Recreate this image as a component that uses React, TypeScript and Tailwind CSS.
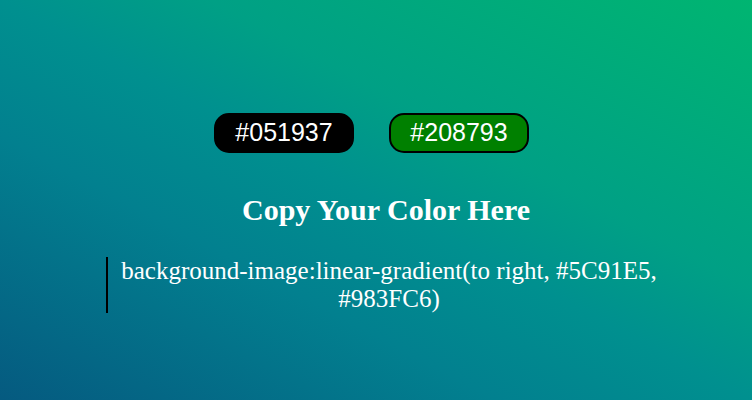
export default function App() {
  return (
    <div className="w-[752px] h-[400px] overflow-hidden bg-[linear-gradient(to_top_right,#055a80_0%,#02808f_33%,#00908f_50%,#00a085_64%,#00b571_100%)] flex flex-col">
      <div className="flex mt-[113px] ml-[214px] gap-[35px]">
        <div className="w-[140px] h-[40px] rounded-[15px] bg-black border-2 border-black flex items-center justify-center text-white text-[25px] font-['Liberation_Sans',Arial,sans-serif]">
          #051937
        </div>
        <div className="w-[140px] h-[40px] rounded-[15px] bg-[#008000] border-2 border-black flex items-center justify-center text-white text-[25px] font-['Liberation_Sans',Arial,sans-serif]">
          #208793
        </div>
      </div>
      <div className="mt-[40px] ml-[20px] w-[732px] text-center text-white font-bold text-[30px] leading-[34px] font-['Liberation_Serif','Times_New_Roman',serif]">
        Copy Your Color Here
      </div>
      <div className="mt-[30px] ml-[106px] w-[564px] border-l-2 border-black text-center text-white text-[25px] leading-[28px] font-['Liberation_Serif','Times_New_Roman',serif]">
        background-image:linear-gradient(to right, #5C91E5, #983FC6)
      </div>
    </div>
  );
}
